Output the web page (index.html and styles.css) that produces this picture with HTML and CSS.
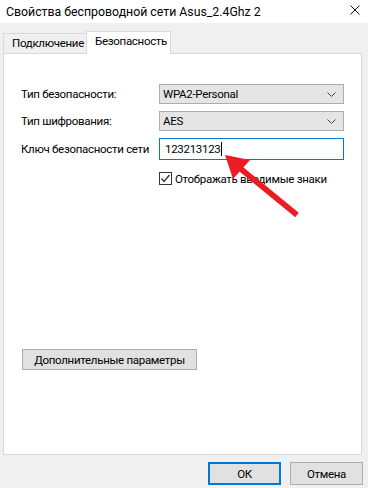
FILE: index.html
```html
<!DOCTYPE html>
<html lang="ru">
<head>
<meta charset="utf-8">
<link rel="stylesheet" href="styles.css">
</head>
<body>
<div class="window">
  <div class="titlebar">
    <span class="title">Свойства беспроводной сети Asus_2.4Ghz 2</span>
    <svg class="close" width="10" height="10" viewBox="0 0 10 10"><path d="M0.5 0.5 L9.5 9.5 M9.5 0.5 L0.5 9.5" stroke="#111" stroke-width="1" fill="none"/></svg>
  </div>
  <div class="tabs">
    <div class="tab">Подключение</div>
    <div class="tab active">Безопасность</div>
  </div>
  <div class="panel">
    <div class="form">
      <div class="label">Тип безопасности:</div>
      <div class="select"><span>WPA2-Personal</span><svg class="chev" width="9" height="5" viewBox="0 0 9 5"><polyline points="0.5,0.5 4.5,4.5 8.5,0.5" stroke="#444" stroke-width="1" fill="none"/></svg></div>
      <div class="label">Тип шифрования:</div>
      <div class="select"><span>AES</span><svg class="chev" width="9" height="5" viewBox="0 0 9 5"><polyline points="0.5,0.5 4.5,4.5 8.5,0.5" stroke="#444" stroke-width="1" fill="none"/></svg></div>
      <div class="label">Ключ безопасности сети</div>
      <div class="input"><span>123213123</span><span class="caret"></span></div>
      <div></div>
      <div class="check-row">
        <span class="checkbox"><svg width="11" height="11" viewBox="0 0 11 11"><polyline points="1.5,5.5 4,8.5 9.5,2" stroke="#333" stroke-width="1.3" fill="none"/></svg></span>
        <span class="check-label">Отображать вводимые знаки</span>
      </div>
    </div>
    <div class="btn adv">Дополнительные параметры</div>
  </div>
  <div class="footer">
    <div class="btn ok">ОК</div>
    <div class="btn">Отмена</div>
  </div>
  <svg class="arrow" width="368" height="488" viewBox="0 0 368 488">
    <line x1="297" y1="215" x2="236" y2="165" stroke="#ec1c24" stroke-width="5.5"/>
    <polygon points="225,155 250,160 233,179" fill="#ec1c24"/>
  </svg>
</div>
</body>
</html>
```
FILE: styles.css
```css
* { box-sizing: border-box; }
html, body { margin: 0; padding: 0; }
body {
  background: #f0f0f0;
  font-family: Roboto, "Noto Sans", sans-serif;
  font-size: 11.5px;
  letter-spacing: -0.3px;
  color: #000;
  white-space: nowrap;
}
.window {
  position: relative;
  width: 368px;
  height: 488px;
  display: flex;
  flex-direction: column;
  overflow: hidden;
}
.titlebar {
  height: 23px;
  background: #fff;
  display: flex;
  align-items: center;
  justify-content: space-between;
  padding: 0 8px 0 6px;
}
.title { font-size: 12.3px; line-height: 14px; letter-spacing: 0; }
.close { display: block; margin-top: -3px; }
.tabs {
  height: 30px;
  display: flex;
  align-items: flex-end;
  padding-left: 3px;
}
.tab {
  height: 20px;
  width: 84px;
  border: 1px solid #d9d9d9;
  border-bottom: none;
  background: #f0f0f0;
  padding-left: 8px;
  line-height: 18px;
}
.tab.active {
  height: 23px;
  width: 85px;
  margin-left: -1px;
  margin-bottom: -1px;
  background: #fff;
  position: relative;
  z-index: 1;
  padding-left: 8px;
  line-height: 18px;
}
.panel {
  height: 402px;
  margin: 0 6px 0 3px;
  background: #fff;
  border: 1px solid #d9d9d9;
  display: flex;
  flex-direction: column;
  padding: 30px 0 84px 17px;
}
.form {
  display: grid;
  grid-template-columns: 138px 185px;
  grid-template-rows: 20px 20px 22px 13px;
  row-gap: 7px;
}
.form > .check-row { margin-top: 5px; }
.label {
  display: flex;
  align-items: center;
}
.select {
  background: #e5e5e5;
  border: 1px solid #acacac;
  display: flex;
  align-items: center;
  justify-content: space-between;
  padding: 0 7px 0 3px;
}
.chev { display: block; }
.input {
  border: 1px solid #0078d7;
  background: #fff;
  display: flex;
  align-items: center;
  padding-left: 5px;
}
.caret {
  width: 1px;
  height: 14px;
  background: #000;
  margin-left: 1px;
}
.check-row {
  display: flex;
  align-items: center;
  height: 13px;
}
.checkbox {
  width: 13px;
  height: 13px;
  border: 1px solid #333;
  background: #fff;
  display: flex;
  align-items: center;
  justify-content: center;
  flex: none;
}
.checkbox svg { display: block; }
.check-label { margin-left: 3px; }
.btn {
  background: #e1e1e1;
  border: 1px solid #adadad;
  display: flex;
  align-items: center;
  justify-content: center;
}
.adv {
  margin-top: auto;
  margin-left: 1px;
  width: 175px;
  height: 21px;
}
.footer {
  display: flex;
  justify-content: flex-end;
  gap: 9px;
  padding: 7px 5px 0 0;
}
.footer .btn {
  width: 73px;
  height: 23px;
}
.footer .ok { border: 2px solid #0078d7; }
.arrow {
  position: absolute;
  left: 0;
  top: 0;
  pointer-events: none;
}
```
